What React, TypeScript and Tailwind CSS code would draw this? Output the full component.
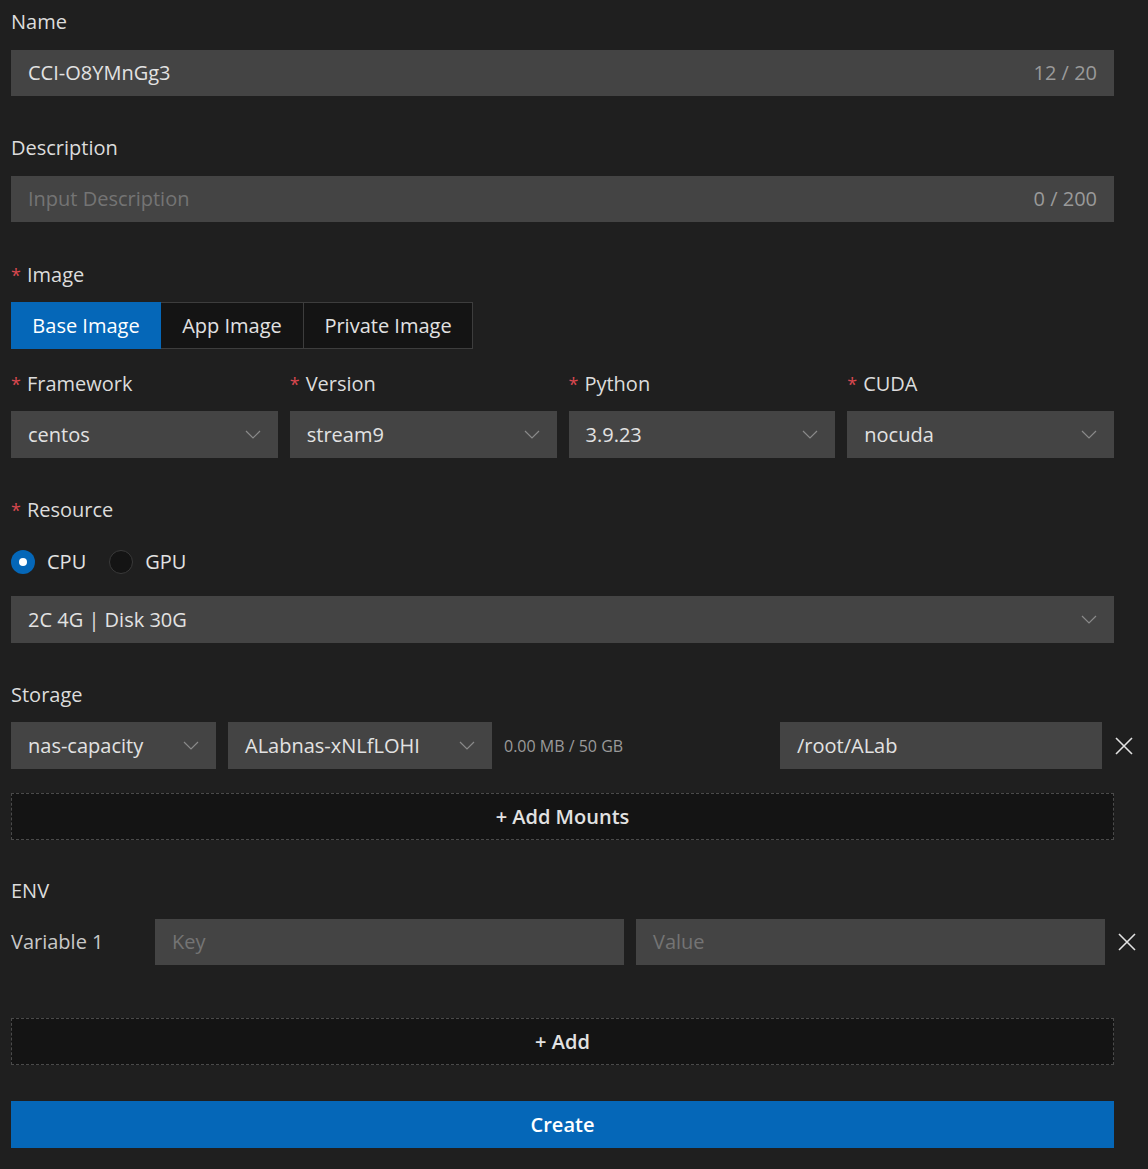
const font = { fontFamily: '"Open Sans", "Noto Sans", sans-serif' };

function Chevron() {
  return (
    <svg width="16" height="10" viewBox="0 0 16 10" className="shrink-0">
      <path d="M1 1 L8 8 L15 1" fill="none" stroke="#8a8a8a" strokeWidth="1.2" />
    </svg>
  );
}

function Close() {
  return (
    <svg width="18" height="18" viewBox="0 0 18 18" className="shrink-0 ml-[13px]">
      <path d="M1 1 L17 17 M17 1 L1 17" stroke="#e2e2e2" strokeWidth="1.6" />
    </svg>
  );
}

function Label({ text, required }: { text: string; required?: boolean }) {
  return (
    <div className="h-7 flex items-center text-[20px] text-[#dcdcdc]">
      {required && <span className="text-[#d9484f] mr-1.5 text-[18px]">*</span>}
      {text}
    </div>
  );
}

function Select({ value, className = "" }: { value: string; className?: string }) {
  return (
    <div className={`h-[47px] shrink-0 bg-[#444444] flex items-center justify-between pl-[17px] pr-[17px] text-[20px] text-[#e2e2e2] ${className}`}>
      <span>{value}</span>
      <Chevron />
    </div>
  );
}

function TextInput({ value, placeholder, count, className = "" }: { value?: string; placeholder?: string; count?: string; className?: string }) {
  return (
    <div className={`h-[46px] shrink-0 bg-[#444444] flex items-center justify-between pl-[17px] pr-[17px] text-[20px] ${className}`}>
      {value ? (
        <span className="text-[#e2e2e2]">{value}</span>
      ) : (
        <span className="text-[#747474]">{placeholder}</span>
      )}
      {count && <span className="text-[#9a9a9a]">{count}</span>}
    </div>
  );
}

export default function App() {
  return (
    <div className="min-h-[1169px] bg-[#1f1f1f] pl-[11px] pr-[34px] pt-2 overflow-hidden" style={font}>
      {/* Name */}
      <Label text="Name" />
      <TextInput value="CCI-O8YMnGg3" count="12 / 20" className="mt-[14px]" />

      {/* Description */}
      <div className="mt-[38px]">
        <Label text="Description" />
        <TextInput placeholder="Input Description" count="0 / 200" className="mt-[14px]" />
      </div>

      {/* Image */}
      <div className="mt-[39px]">
        <Label text="Image" required />
        <div className="mt-[13px] flex h-[47px] text-[20px]">
          <div className="w-[150px] bg-[#0567b8] text-white flex items-center justify-center">Base Image</div>
          <div className="w-[143px] bg-[#141414] border border-[#3d3d3d] border-l-0 text-[#e2e2e2] flex items-center justify-center">App Image</div>
          <div className="w-[169px] bg-[#141414] border border-[#3d3d3d] border-l-0 text-[#e2e2e2] flex items-center justify-center">Private Image</div>
        </div>
      </div>

      <div className="mt-[21px] grid grid-cols-4 gap-x-3">
        {[
          ["Framework", "centos"],
          ["Version", "stream9"],
          ["Python", "3.9.23"],
          ["CUDA", "nocuda"],
        ].map(([label, value]) => (
          <div key={label}>
            <Label text={label} required />
            <Select value={value} className="mt-[13px]" />
          </div>
        ))}
      </div>

      {/* Resource */}
      <div className="mt-[38px]">
        <Label text="Resource" required />
        <div className="mt-[26px] flex items-center h-6 text-[20px] text-[#e2e2e2]">
          <span className="w-6 h-6 rounded-full bg-[#0567b8] flex items-center justify-center">
            <span className="w-2 h-2 rounded-full bg-white" />
          </span>
          <span className="ml-3">CPU</span>
          <span className="ml-[23px] w-6 h-6 rounded-full bg-[#141414] border border-[#3a3a3a]" />
          <span className="ml-3">GPU</span>
        </div>
        <Select value="2C 4G | Disk 30G" className="mt-[22px]" />
      </div>

      {/* Storage */}
      <div className="mt-[38px]">
        <Label text="Storage" />
        <div className="mt-[13px] flex items-center">
          <Select value="nas-capacity" className="w-[205px]" />
          <Select value="ALabnas-xNLfLOHI" className="w-[264px] ml-3" />
          <span className="ml-3 shrink-0 text-[16px] text-[#9a9a9a] w-[276px]">0.00 MB / 50 GB</span>
          <div className="w-[322px] shrink-0 h-[47px] bg-[#444444] flex items-center pl-[17px] text-[20px] text-[#e2e2e2]">/root/ALab</div>
          <Close />
        </div>
        <div className="mt-6 h-[47px] bg-[#141414] border border-dashed border-[#4a4a4a] flex items-center justify-center text-[20px] text-[#e2e2e2] font-semibold">
          + Add Mounts
        </div>
      </div>

      {/* ENV */}
      <div className="mt-[37px]">
        <Label text="ENV" />
        <div className="mt-[14px] flex items-center">
          <span className="w-[144px] shrink-0 text-[20px] text-[#c8c8c8]">Variable 1</span>
          <TextInput placeholder="Key" className="w-[469px]" />
          <TextInput placeholder="Value" className="w-[469px] ml-3" />
          <Close />
        </div>
        <div className="mt-[53px] h-[47px] bg-[#141414] border border-dashed border-[#4a4a4a] flex items-center justify-center text-[20px] text-[#e2e2e2] font-semibold">
          + Add
        </div>
      </div>

      <div className="mt-9 h-[47px] bg-[#0567b8] flex items-center justify-center text-[20px] text-white font-semibold">
        Create
      </div>
    </div>
  );
}
